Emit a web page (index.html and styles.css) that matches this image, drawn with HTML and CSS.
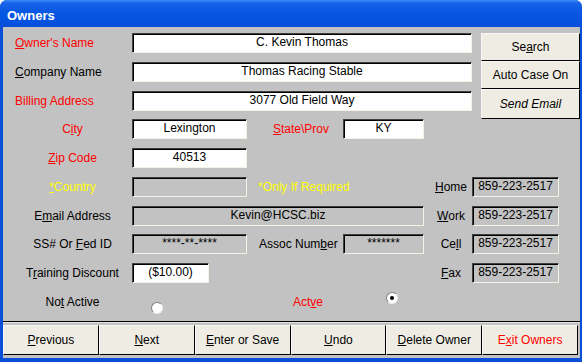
FILE: index.html
```html
<!DOCTYPE html>
<html>
<head>
<meta charset="utf-8">
<link rel="stylesheet" href="styles.css">
</head>
<body>
<div class="window">
  <div class="titlebar">Owners</div>
  <div class="client">
    <div class="form">
      <div class="lbl left red r1 c-lbl"><u>O</u>wner's Name</div>
      <div class="field r1 c-wide">C. Kevin Thomas</div>
      <div class="side">
        <div class="sbtn">Se<u>a</u>rch</div>
        <div class="sbtn">Auto Case On</div>
        <div class="sbtn italic">Send Email</div>
      </div>

      <div class="lbl left r2 c-lbl"><u>C</u>ompany Name</div>
      <div class="field r2 c-wide">Thomas Racing Stable</div>

      <div class="lbl left red r3 c-lbl">Billin<u>g</u> Address</div>
      <div class="field r3 c-wide">3077 Old Field Way</div>

      <div class="lbl red r4 c-lbl">C<u>i</u>ty</div>
      <div class="field r4 c-short">Lexington</div>
      <div class="lbl left red r4 c-mid pad-state"><u>S</u>tate\Prov</div>
      <div class="field r4 c-state">KY</div>

      <div class="lbl red r5 c-lbl"><u>Z</u>ip Code</div>
      <div class="field r5 c-short">40513</div>

      <div class="lbl yellow r6 c-lbl"><u>*</u>Country</div>
      <div class="field gray r6 c-short"></div>
      <div class="lbl left yellow r6 c-note">*Only If Required</div>
      <div class="lbl plbl r6 c-plbl"><u>H</u>ome</div>
      <div class="field gray r6 c-phone">859-223-2517</div>

      <div class="lbl r7 c-lbl">E<u>m</u>ail Address</div>
      <div class="field gray r7 c-email">Kevin@HCSC.biz</div>
      <div class="lbl plbl r7 c-plbl"><u>W</u>ork</div>
      <div class="field gray r7 c-phone">859-223-2517</div>

      <div class="lbl r8 c-lbl">SS# Or <u>F</u>ed ID</div>
      <div class="field gray r8 c-short">****-**-****</div>
      <div class="lbl left r8 c-mid pad-assoc">Assoc Num<u>b</u>er</div>
      <div class="field gray r8 c-state">*******</div>
      <div class="lbl plbl r8 c-plbl">Ce<u>l</u>l</div>
      <div class="field gray r8 c-phone">859-223-2517</div>

      <div class="lbl r9 c-lbl">T<u>r</u>aining Discount</div>
      <div class="field narrow r9 c-short">($10.00)</div>
      <div class="lbl plbl r9 c-plbl"><u>F</u>ax</div>
      <div class="field gray r9 c-phone">859-223-2517</div>

      <div class="lbl r10 c-lbl">No<u>t</u> Active</div>
      <div class="radio off r10 c-short"></div>
      <div class="lbl left red r10 c-mid pad-active">Act<u>v</u>e</div>
      <div class="radio on r10 c-state"></div>
    </div>
    <div class="toolbar">
      <div class="tbtn"><u>P</u>revious</div>
      <div class="tbtn"><u>N</u>ext</div>
      <div class="tbtn"><u>E</u>nter or Save</div>
      <div class="tbtn"><u>U</u>ndo</div>
      <div class="tbtn"><u>D</u>elete Owner</div>
      <div class="tbtn red">E<u>x</u>it Owners</div>
    </div>
  </div>
</div>
</body>
</html>
```

FILE: styles.css
```css
* { box-sizing: border-box; }
html, body { margin: 0; padding: 0; background: #ffffff; }
body { font-family: "Liberation Sans", Arial, sans-serif; font-size: 12px; color: #000; }

.window {
  width: 582px;
  height: 362px;
  background: #0a4fd8;
  border-radius: 7px 7px 0 0;
  display: flex;
  flex-direction: column;
  overflow: hidden;
}
.titlebar {
  height: 27px;
  flex: none;
  padding: 3px 0 0 7px;
  line-height: 25px;
  color: #fff;
  font-weight: bold;
  font-size: 13px;
  background: linear-gradient(#3e8cf6 0px, #1a63e8 3px, #0858e4 12px, #0452df 22px, #0a4fd8 27px);
}
.client {
  margin: 0 2px 0 3px;
  height: 331px;
  background: #c2c2c2;
  flex: none;
}
.form {
  padding: 6px 0 0 12px;
  height: 294px;
  display: grid;
  grid-template-columns: 115px 2px 115px 96px 81px 48px 9px 78px 21px;
  grid-template-rows: repeat(9, 28.75px) 29.25px;
}
.r1 { grid-row: 1; } .r2 { grid-row: 2; } .r3 { grid-row: 3; } .r4 { grid-row: 4; } .r5 { grid-row: 5; }
.r6 { grid-row: 6; } .r7 { grid-row: 7; } .r8 { grid-row: 8; } .r9 { grid-row: 9; } .r10 { grid-row: 10; }
.c-lbl { grid-column: 1 / 2; }
.c-wide { grid-column: 3 / 7; }
.c-short { grid-column: 3 / 4; }
.c-mid { grid-column: 4 / 5; }
.c-note { grid-column: 4 / 6; padding-left: 11px; }
.c-state { grid-column: 5 / 6; }
.c-email { grid-column: 3 / 6; }
.c-plbl { grid-column: 6 / 7; }
.c-phone { grid-column: 7 / 9; }

.lbl {
  height: 20px;
  line-height: 20px;
  white-space: nowrap;
  text-align: center;
  align-self: start;
}
.lbl.left { text-align: left; }
.plbl { padding-left: 6px; }
.pad-state { padding-left: 26px; }
.pad-assoc { padding-left: 12px; }
.pad-active { padding-left: 46px; }
.red { color: #ff0000; }
.yellow { color: #ffff00; }
u { text-decoration-thickness: 1px; text-underline-offset: 1px; }

.field {
  height: 20px;
  align-self: start;
  background: #fff;
  border: 1px solid;
  border-color: #404040 #f4f1e6 #f4f1e6 #404040;
  box-shadow: inset 1px 1px 0 #000;
  line-height: 17px;
  text-align: center;
  white-space: nowrap;
  overflow: hidden;
}
.field.gray { background: #c2c2c2; }
.field.narrow { width: 77px; justify-self: start; }

.side {
  grid-column: 8 / 10;
  grid-row: 1 / 4;
  display: flex;
  flex-direction: column;
  height: 86px;
}
.sbtn {
  height: 28px;
  flex: none;
  background: #efede3;
  border-top: 1px solid #f8f8f8;
  border-left: 1px solid #f8f8f8;
  border-right: 1px solid #000;
  border-bottom: 1px solid #000;
  display: flex;
  align-items: center;
  justify-content: center;
  white-space: nowrap;
}
.sbtn:last-child { height: 30px; }
.italic { font-style: italic; }

.radio {
  width: 12px;
  height: 12px;
  border-radius: 50%;
  background: #fff;
  border: 1px solid;
  border-color: #808080 #f0f0f0 #f0f0f0 #808080;
  align-self: start;
  justify-self: start;
  position: relative;
}
.radio.off { margin-left: 19px; margin-top: 10px; }
.radio.on { margin-left: 43px; margin-top: 0; }
.radio.on::after {
  content: "";
  position: absolute;
  left: 3px;
  top: 3px;
  width: 4px;
  height: 4px;
  border-radius: 50%;
  background: #000;
}

.toolbar {
  border-top: 1px solid #000;
  box-shadow: inset 0 1px 0 #e4e4e4;
  padding: 3px 2px 3px 0;
  height: 37px;
  display: grid;
  grid-template-columns: repeat(6, 1fr);
}
.tbtn {
  height: 30px;
  background: #efede3;
  border-top: 1px solid #f8f8f8;
  border-left: 1px solid #f8f8f8;
  border-right: 1px solid #000;
  border-bottom: 1px solid #000;
  display: flex;
  align-items: center;
  justify-content: center;
  white-space: nowrap;
}
```
